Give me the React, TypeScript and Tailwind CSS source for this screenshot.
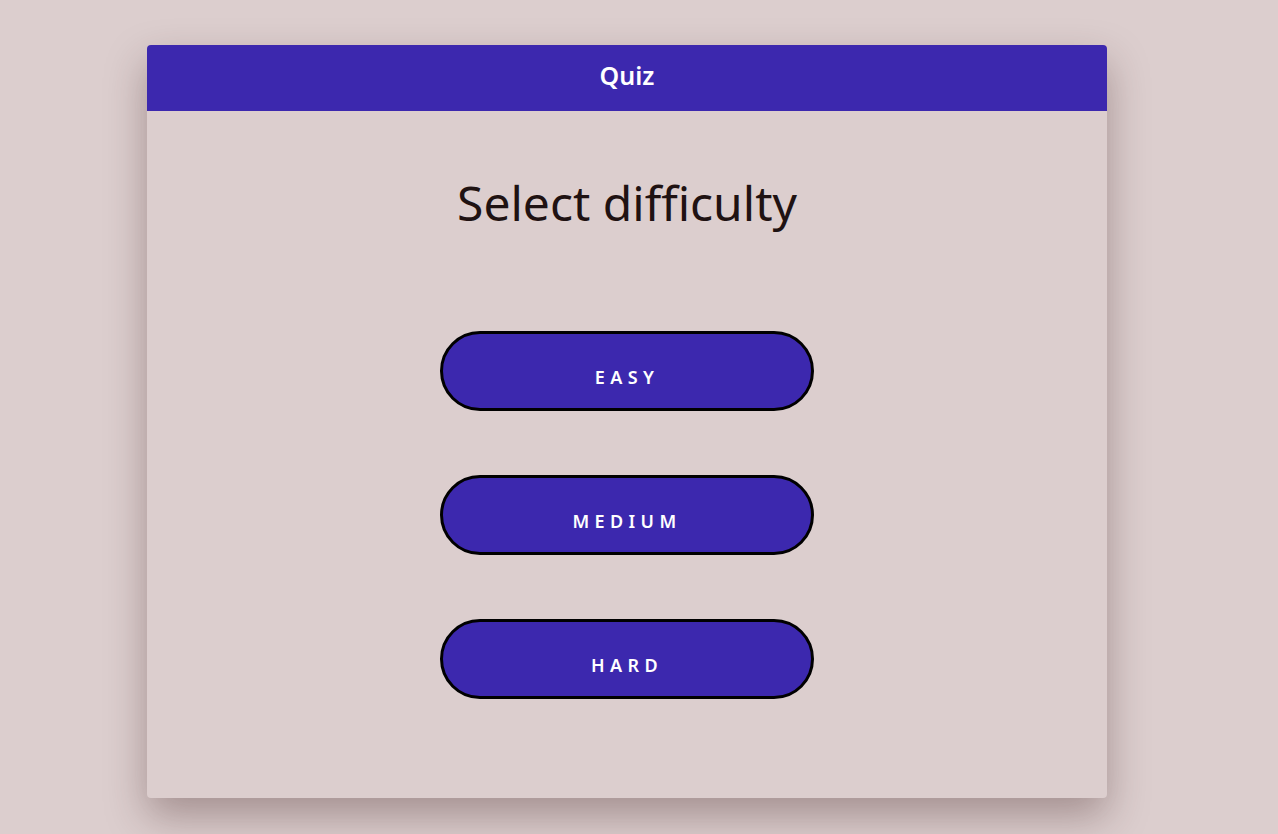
import React from 'react';

const levels = ['Easy', 'Medium', 'Hard'];

const App: React.FC = () => {
  return (
    <div
      className="min-h-screen bg-[#dccece] flex pl-[147px] pt-[45px] pb-[36px]"
      style={{ fontFamily: '"Noto Sans", "Open Sans", sans-serif' }}
    >
      <div className="w-[960px] h-[753px] bg-[#dccece] rounded-[4px] overflow-hidden shadow-[0_18px_40px_rgba(60,30,30,0.35)] flex flex-col">
        <header className="h-[66px] bg-[#3c28ae] flex items-center justify-center pb-[6px]">
          <h1 className="text-white text-[25px] font-semibold leading-none">Quiz</h1>
        </header>
        <main className="flex flex-col items-center">
          <h2 className="mt-[68px] text-[48px] leading-none text-[#1f1212] font-normal">Select difficulty</h2>
          <div className="mt-[104px] flex flex-col gap-[64px]">
            {levels.map((level) => (
              <button
                key={level}
                className="w-[374px] h-[80px] rounded-full border-[3px] border-black bg-[#3c28ae] text-white uppercase text-[18px] font-semibold tracking-[0.3em] pt-[12px]"
              >
                {level}
              </button>
            ))}
          </div>
        </main>
      </div>
    </div>
  );
};

export default App;
